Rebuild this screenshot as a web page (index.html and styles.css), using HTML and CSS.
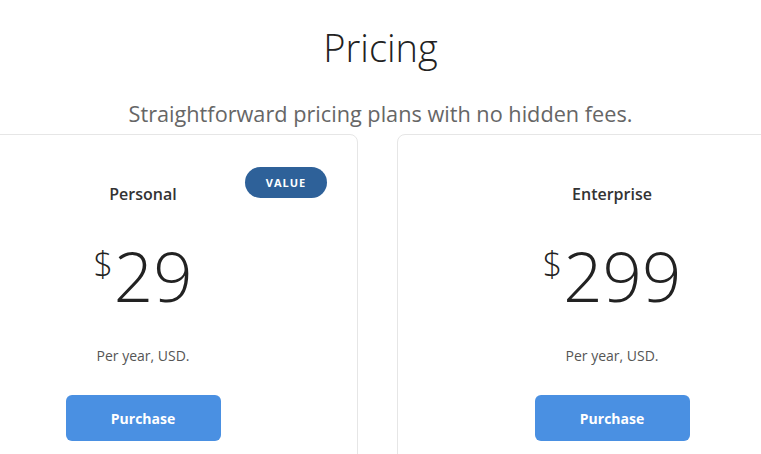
FILE: index.html
```html
<!DOCTYPE html>
<html>
<head>
<meta charset="utf-8">
<link rel="stylesheet" href="styles.css">
</head>
<body>
<main class="page">
  <h1 class="title">Pricing</h1>
  <p class="subtitle">Straightforward pricing plans with no hidden fees.</p>
  <div class="plans">
    <section class="card">
      <span class="badge">VALUE</span>
      <h2 class="plan-name">Personal</h2>
      <div class="price"><span class="currency">$</span><span class="amount">29</span></div>
      <p class="period">Per year, USD.</p>
      <button class="buy">Purchase</button>
    </section>
    <section class="card">
      <h2 class="plan-name">Enterprise</h2>
      <div class="price"><span class="currency">$</span><span class="amount">299</span></div>
      <p class="period">Per year, USD.</p>
      <button class="buy">Purchase</button>
    </section>
  </div>
</main>
</body>
</html>
```
FILE: styles.css
```css
html, body {
  margin: 0;
  padding: 0;
  background: #fff;
  overflow: hidden;
}
body {
  font-family: "Open Sans", "Liberation Sans", sans-serif;
  color: #333;
  width: 761px;
  height: 454px;
}
.page {
  display: flex;
  flex-direction: column;
  align-items: center;
}
.title {
  margin: 19px 0 0;
  font-size: 38px;
  font-weight: 300;
  line-height: 56px;
  color: #222;
}
.subtitle {
  margin: 24px 0 0;
  font-size: 21.7px;
  font-weight: 400;
  line-height: 30px;
  color: #666;
}
.plans {
  display: flex;
  justify-content: center;
  gap: 39px;
  width: 761px;
  margin-top: 5px;
  padding-right: 6px;
  box-sizing: border-box;
}
.card {
  position: relative;
  flex: 0 0 430px;
  height: 330px;
  border: 1px solid #e6e6e6;
  border-radius: 8px;
  box-sizing: border-box;
  display: flex;
  flex-direction: column;
  align-items: center;
  padding-top: 47px;
}
.badge {
  position: absolute;
  top: 32px;
  left: 316px;
  width: 82px;
  height: 31px;
  border-radius: 16px;
  background: #2e6199;
  color: #fff;
  font-size: 11px;
  font-weight: 700;
  letter-spacing: 1px;
  line-height: 31px;
  text-align: center;
}
.plan-name {
  margin: 0;
  font-size: 16px;
  font-weight: 600;
  line-height: 24px;
  color: #333;
}
.price {
  display: flex;
  align-items: flex-start;
  margin-top: 29px;
  color: #222;
}
.currency {
  font-size: 34px;
  font-weight: 300;
  line-height: 44px;
  margin-top: 7px;
  margin-right: 1px;
}
.amount {
  font-size: 69px;
  font-weight: 300;
  line-height: 80px;
}
.period {
  margin: 31px 0 0;
  font-size: 14px;
  line-height: 20px;
  color: #555;
}
.buy {
  margin-top: 29px;
  width: 155px;
  height: 46px;
  border: 0;
  border-radius: 6px;
  background: #4a90e2;
  color: #fff;
  font-family: "Open Sans", "Liberation Sans", sans-serif;
  font-size: 14px;
  font-weight: 700;
}
```
